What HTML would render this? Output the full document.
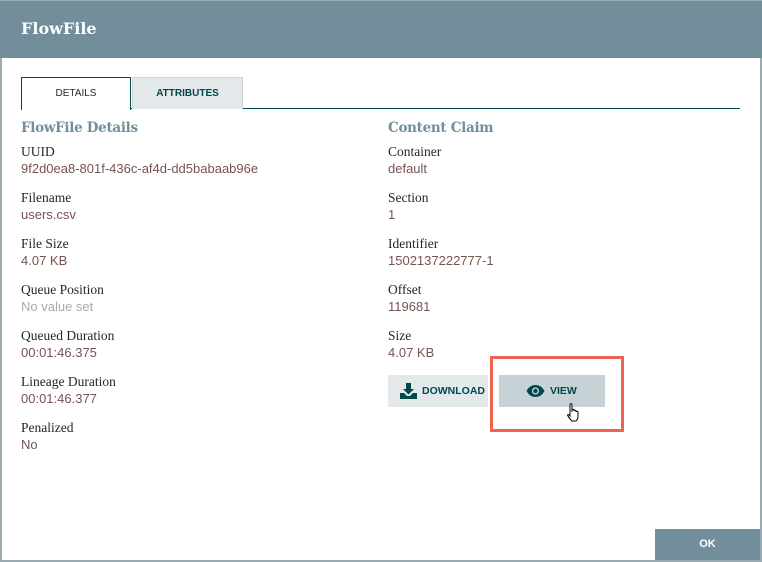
<!DOCTYPE html>
<html><head><style>
body{margin:0;width:762px;height:562px;position:relative;background:#fff;overflow:hidden;font-family:"Liberation Sans",sans-serif}
.a{position:absolute}
.hdr{left:0;top:0;width:762px;height:57px;background:#728e9b;border-top:1px solid #9aabb4}
.t{left:21px;top:19px;color:#fff;font:bold 16px "DejaVu Serif",serif}
.lb{position:absolute;font:13.5px "Liberation Serif",serif;color:#262626}
.v{position:absolute;font:13px "Liberation Sans",sans-serif;color:#775351}
.h{position:absolute;font:bold 13.5px "DejaVu Serif",serif;color:#728e9b;letter-spacing:-0.3px}
.tab{position:absolute;top:77px;height:32px;box-sizing:border-box;font:bold 10px "Liberation Sans",sans-serif;text-align:center;line-height:31px}
.btn{position:absolute;top:375px;height:32px;font:bold 10.5px "Liberation Sans",sans-serif;color:#004849;line-height:32px}
</style></head><body>
<div class="a" style="left:0;top:0;width:2px;height:562px;background:#9aabb4"></div>
<div class="a" style="left:760px;top:0;width:2px;height:562px;background:#9aabb4"></div>
<div class="a" style="left:0;top:560px;width:762px;height:2px;background:#9aabb4"></div>
<div class="a hdr"></div>
<div class="a t">FlowFile</div>
<div class="a" style="left:21px;top:108px;width:719px;height:1px;background:#004849"></div>
<div class="tab" style="left:21px;width:110px;border:1px solid #004849;border-bottom:none;background:#fff;color:#262626;height:33px;font-weight:normal">DETAILS</div>
<div class="tab" style="left:132px;width:111px;background:#e3e8eb;border:1px solid #cfd6da;border-bottom:none;color:#004849">ATTRIBUTES</div>
<div class="h" style="left:21px;top:120px">FlowFile Details</div>
<div class="h" style="left:388px;top:120px">Content Claim</div>

<div class="lb" style="left:21px;top:144px">UUID</div><div class="v" style="left:21px;top:161px">9f2d0ea8-801f-436c-af4d-dd5babaab96e</div>
<div class="lb" style="left:21px;top:190px">Filename</div><div class="v" style="left:21px;top:207px">users.csv</div>
<div class="lb" style="left:21px;top:236px">File Size</div><div class="v" style="left:21px;top:253px">4.07 KB</div>
<div class="lb" style="left:21px;top:282px">Queue Position</div><div class="v" style="left:21px;top:299px;color:#aaa">No value set</div>
<div class="lb" style="left:21px;top:328px">Queued Duration</div><div class="v" style="left:21px;top:345px">00:01:46.375</div>
<div class="lb" style="left:21px;top:374px">Lineage Duration</div><div class="v" style="left:21px;top:391px">00:01:46.377</div>
<div class="lb" style="left:21px;top:420px">Penalized</div><div class="v" style="left:21px;top:437px">No</div>

<div class="lb" style="left:388px;top:144px">Container</div><div class="v" style="left:388px;top:161px">default</div>
<div class="lb" style="left:388px;top:190px">Section</div><div class="v" style="left:388px;top:207px">1</div>
<div class="lb" style="left:388px;top:236px">Identifier</div><div class="v" style="left:388px;top:253px">1502137222777-1</div>
<div class="lb" style="left:388px;top:282px">Offset</div><div class="v" style="left:388px;top:299px">119681</div>
<div class="lb" style="left:388px;top:328px">Size</div><div class="v" style="left:388px;top:345px">4.07 KB</div>

<div class="btn" style="left:388px;width:100px;background:#e3e8eb">
<svg class="a" style="left:12px;top:8px" width="17" height="16" viewBox="0 0 17 16"><path d="M6 0h5v6h3l-5.5 5.5L3 6h3z" fill="#004849"/><path d="M0 10h4l3 3h3l3-3h4v6H0z" fill="#004849"/></svg>
<span class="a" style="left:34px">DOWNLOAD</span></div>
<div class="btn" style="left:499px;width:106px;background:#c7d2d7">
<svg class="a" style="left:27px;top:10px" width="19" height="12" viewBox="0 0 19 12"><path d="M0.5 6C3 1.5 6 0 9.5 0S16 1.5 18.5 6C16 10.5 13 12 9.5 12S3 10.5 0.5 6z" fill="#004849"/><circle cx="9.5" cy="6" r="3.6" fill="#c7d2d7"/><circle cx="9.5" cy="6" r="2.2" fill="#004849"/></svg>
<span class="a" style="left:51px">VIEW</span></div>
<svg class="a" style="left:566px;top:403px" width="16" height="20" viewBox="0 0 16 20"><path d="M4 1.5c0-1 2-1 2 0V9l0-2c0-1 2-1 2 0v1c0-1 2-1 2 0v1c0-1 2-1 2 0v5c0 2-1 3-2 4H6c-1-1-3-3-4-5-1-1 0-2 1-1l1 1z" fill="#fff" stroke="#000" stroke-width="1"/></svg>
<div class="a" style="left:490px;top:356px;width:128px;height:70px;border:3px solid #ef6351"></div>

<div class="a" style="left:655px;top:529px;width:105px;height:31px;background:#728e9b;color:#fff;font:bold 11px 'Liberation Sans',sans-serif;text-align:center;line-height:31px">OK</div>
</body></html>
